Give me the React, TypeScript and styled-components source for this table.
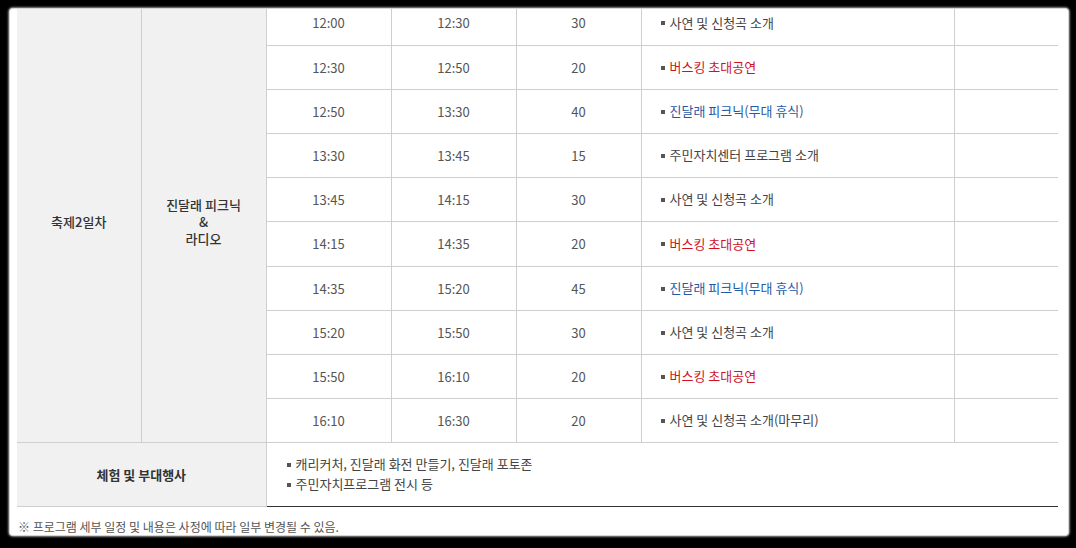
import styled, { createGlobalStyle } from "styled-components";

const GlobalStyle = createGlobalStyle`
	html, body {
		margin: 0;
		padding: 0;
		background: #000;
	}
	body {
		font-family: "Noto Sans CJK KR", "Noto Sans", sans-serif;
	}
`;

const Frame = styled.div`
	width: 1076px;
	height: 548px;
	box-sizing: border-box;
	padding: 9px 8px 13px 10px;
	background: #000;
`;

const Card = styled.div`
	height: 100%;
	background: #fff;
	border-radius: 3px;
	overflow: hidden;
	box-shadow: 0 0 0 1px #d4d4d4, 0 0 2px 2px #8a8a8a;
	padding: 0 10px 0 7px;
	box-sizing: border-box;
`;

const Table = styled.table`
	margin-top: -8px;
	width: 1041px;
	border-collapse: collapse;
	table-layout: fixed;
	font-size: 13px;
	color: #555;
	border-bottom: 1px solid #333;
`;

const Row = styled.tr<{ $h?: number }>`
	height: ${(p) => p.$h ?? 44}px;
`;

const Head = styled.td<{ $bold?: boolean }>`
	background: #f1f1f1;
	border-right: 1px solid #cfcfcf;
	border-bottom: 1px solid #cfcfcf;
	text-align: center;
	vertical-align: middle;
	color: #333;
	font-weight: ${(p) => (p.$bold ? 700 : 500)};
	line-height: 17px;
	padding: 0;
`;

const Cell = styled.td`
	border-right: 1px solid #cfcfcf;
	border-bottom: 1px solid #cfcfcf;
	text-align: center;
	vertical-align: middle;
	padding: 0;
`;

const LastCell = styled(Cell)`
	border-right: none;
`;

const DescCell = styled(Cell)`
	text-align: left;
	padding-left: 19px;
`;

const WideCell = styled.td`
	text-align: left;
	vertical-align: middle;
	padding: 0 0 0 20px;
	border-bottom: 1px solid #333;
`;

const Item = styled.div<{ $tone?: "red" | "blue" }>`
	display: flex;
	align-items: center;
	gap: 5px;
	line-height: 20px;
	color: ${(p) =>
		p.$tone === "red" ? "#d0121f" : p.$tone === "blue" ? "#1f5aa6" : "#444"};
	&::before {
		content: "";
		width: 4px;
		height: 4px;
		background: #555;
		flex: none;
		margin-top: 1px;
	}
`;

const Note = styled.p`
	margin: 0;
	padding: 11px 0 0 1px;
	font-size: 12px;
	color: #555;
`;

type Slot = {
	start: string;
	end: string;
	mins: number;
	title: string;
	tone?: "red" | "blue";
};

const slots: Slot[] = [
	{ start: "12:00", end: "12:30", mins: 30, title: "사연 및 신청곡 소개" },
	{ start: "12:30", end: "12:50", mins: 20, title: "버스킹 초대공연", tone: "red" },
	{ start: "12:50", end: "13:30", mins: 40, title: "진달래 피크닉(무대 휴식)", tone: "blue" },
	{ start: "13:30", end: "13:45", mins: 15, title: "주민자치센터 프로그램 소개" },
	{ start: "13:45", end: "14:15", mins: 30, title: "사연 및 신청곡 소개" },
	{ start: "14:15", end: "14:35", mins: 20, title: "버스킹 초대공연", tone: "red" },
	{ start: "14:35", end: "15:20", mins: 45, title: "진달래 피크닉(무대 휴식)", tone: "blue" },
	{ start: "15:20", end: "15:50", mins: 30, title: "사연 및 신청곡 소개" },
	{ start: "15:50", end: "16:10", mins: 20, title: "버스킹 초대공연", tone: "red" },
	{ start: "16:10", end: "16:30", mins: 20, title: "사연 및 신청곡 소개(마무리)" },
];

export default function App() {
	return (
		<>
			<GlobalStyle />
			<Frame>
				<Card>
					<Table>
						<colgroup>
							<col style={{ width: 124 }} />
							<col style={{ width: 125 }} />
							<col style={{ width: 125 }} />
							<col style={{ width: 125 }} />
							<col style={{ width: 125 }} />
							<col style={{ width: 313 }} />
							<col style={{ width: 104 }} />
						</colgroup>
						<tbody>
							{slots.map((s, i) => (
								<Row key={s.start} $h={i === 5 ? 45 : 44}>
									{i === 0 && (
										<>
											<Head rowSpan={slots.length}>축제2일차</Head>
											<Head rowSpan={slots.length}>
												진달래 피크닉
												<br />&amp;
												<br />라디오
											</Head>
										</>
									)}
									<Cell>{s.start}</Cell>
									<Cell>{s.end}</Cell>
									<Cell>{s.mins}</Cell>
									<DescCell>
										<Item $tone={s.tone}>{s.title}</Item>
									</DescCell>
									<LastCell />
								</Row>
							))}
							<Row $h={64}>
								<Head colSpan={2} $bold>
									체험 및 부대행사
								</Head>
								<WideCell colSpan={5}>
									<Item>캐리커처, 진달래 화전 만들기, 진달래 포토존</Item>
									<Item>주민자치프로그램 전시 등</Item>
								</WideCell>
							</Row>
						</tbody>
					</Table>
					<Note>※ 프로그램 세부 일정 및 내용은 사정에 따라 일부 변경될 수 있음.</Note>
				</Card>
			</Frame>
		</>
	);
}
